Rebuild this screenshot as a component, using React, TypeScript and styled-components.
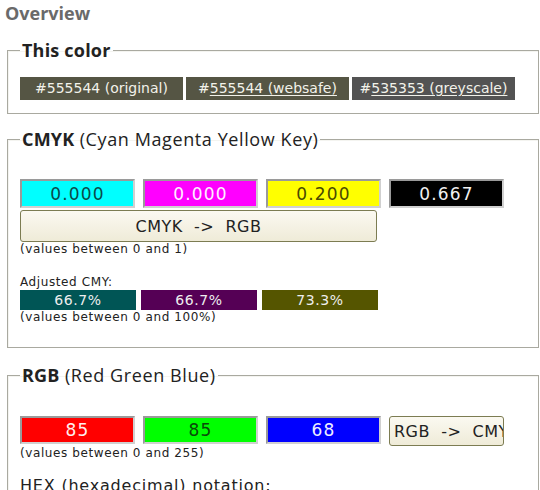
import styled, { createGlobalStyle } from "styled-components"

const GlobalStyle = createGlobalStyle`
  body {
    margin: 0;
    background: #ffffff;
    font-family: "DejaVu Sans", Verdana, sans-serif;
    color: #222;
  }
`

const Page = styled.div`
  width: 540px;
  height: 490px;
  overflow: hidden;
  padding: 0 1px 0 7px;
  box-sizing: border-box;
`

const Title = styled.h2`
  margin: 0 0 14px -2px;
  padding-top: 1px;
  font-family: "Open Sans", sans-serif;
  font-size: 18px;
  line-height: 24px;
  font-weight: 700;
  color: #6a6a6a;
`

const Fieldset = styled.fieldset<{ pad: string; gap: number }>`
  margin: 0 0 ${(p) => p.gap}px 0;
  padding: ${(p) => p.pad};
  border: 1px solid #a9a9a0;
  box-shadow: inset 1px 1px 0 #f4f4f0;
  min-width: 0;
`

const Legend = styled.legend`
  padding: 0 2px;
  font-family: "Open Sans", sans-serif;
  font-size: 18px;
  line-height: 22px;
  letter-spacing: 0.6px;
  color: #222;

  b {
    font-weight: 700;
    letter-spacing: 0.2px;
  }
`

const ChipRow = styled.div`
  display: flex;
  gap: 3px;
`

const Chip = styled.div<{ bg: string }>`
  width: 163px;
  height: 23px;
  background: ${(p) => p.bg};
  color: #f2f2ea;
  font-size: 14px;
  line-height: 23px;
  text-align: center;
  white-space: nowrap;

  a {
    color: #f2f2ea;
    text-decoration: underline;
    text-underline-offset: 2px;
  }
`

const InputRow = styled.div`
  display: flex;
  gap: 8px;
  align-items: flex-start;
`

const ColorInput = styled.input<{ bg: string; fg: string; h: number }>`
  width: 115px;
  height: ${(p) => p.h}px;
  box-sizing: border-box;
  margin: 0;
  padding: 0;
  border: 2px solid;
  border-color: #9a9a9a #d0d0d0 #d0d0d0 #9a9a9a;
  background: ${(p) => p.bg};
  color: ${(p) => p.fg};
  font-family: "DejaVu Sans", Verdana, sans-serif;
  font-size: 17px;
  letter-spacing: 1.2px;
  text-align: center;
  outline: none;
`

const ConvertButton = styled.button<{ w: number; h: number; align: string }>`
  width: ${(p) => p.w}px;
  height: ${(p) => p.h}px;
  box-sizing: border-box;
  margin: 0;
  padding: 0 4px;
  border: 1.5px solid #7c7c52;
  border-radius: 3px;
  background: linear-gradient(#fbf9f1, #efebd8);
  color: #222;
  font-family: "DejaVu Sans", Verdana, sans-serif;
  font-size: 16px;
  letter-spacing: 0.5px;
  text-align: ${(p) => p.align};
  white-space: pre;
  overflow: hidden;
`

const Spacer = styled.div<{ h: number }>`
  height: ${(p) => p.h}px;
`

const Note = styled.div`
  font-size: 12px;
  line-height: 15px;
  letter-spacing: 0.6px;
  color: #222;
`

const SmallLabel = styled.div`
  margin-top: 18px;
  font-size: 12px;
  line-height: 14px;
  letter-spacing: 0.6px;
`

const AdjRow = styled.div`
  display: flex;
  gap: 5px;
  margin-top: 1px;
`

const AdjChip = styled.div<{ bg: string }>`
  width: 116px;
  height: 20px;
  background: ${(p) => p.bg};
  color: #eeeeee;
  font-size: 14px;
  line-height: 20px;
  letter-spacing: 0.6px;
  text-align: center;
`

const HexLabel = styled.div`
  margin-top: 16px;
  font-size: 16px;
  line-height: 18px;
  letter-spacing: 0.8px;
`

export default function App() {
  return (
    <Page>
      <GlobalStyle />
      <Title>Overview</Title>

      <Fieldset pad="16px 12px 13px 12px" gap={14}>
        <Legend>
          <b>This color</b>
        </Legend>
        <ChipRow>
          <Chip bg="#555544">#555544 (original)</Chip>
          <Chip bg="#555544">
            #<a href="#">555544 (websafe)</a>
          </Chip>
          <Chip bg="#535353">
            #<a href="#">535353 (greyscale)</a>
          </Chip>
        </ChipRow>
      </Fieldset>

      <Fieldset pad="29px 12px 22px 12px" gap={16}>
        <Legend>
          <b>CMYK</b> (Cyan Magenta Yellow Key)
        </Legend>
        <InputRow>
          <ColorInput h={29} bg="#00ffff" fg="#0a4a4a" defaultValue="0.000" />
          <ColorInput h={29} bg="#ff00ff" fg="#ffeeff" defaultValue="0.000" />
          <ColorInput h={29} bg="#ffff00" fg="#4a4a00" defaultValue="0.200" />
          <ColorInput h={29} bg="#000000" fg="#f0f0f0" defaultValue="0.667" />
        </InputRow>
        <Spacer h={2} />
        <ConvertButton w={357} h={32} align="center">
          {"CMYK  ->  RGB"}
        </ConvertButton>
        <Note>(values between 0 and 1)</Note>
        <SmallLabel>Adjusted CMY:</SmallLabel>
        <AdjRow>
          <AdjChip bg="#005555">66.7%</AdjChip>
          <AdjChip bg="#550055">66.7%</AdjChip>
          <AdjChip bg="#555500">73.3%</AdjChip>
        </AdjRow>
        <Note>(values between 0 and 100%)</Note>
      </Fieldset>

      <Fieldset pad="30px 12px 20px 12px" gap={0}>
        <Legend>
          <b>RGB</b> (Red Green Blue)
        </Legend>
        <InputRow>
          <ColorInput h={28} bg="#ff0000" fg="#ffeeee" defaultValue="85" />
          <ColorInput h={28} bg="#00ff00" fg="#0a4a0a" defaultValue="85" />
          <ColorInput h={28} bg="#0000ff" fg="#eeeeff" defaultValue="68" />
          <ConvertButton w={115} h={30} align="left">
            {"RGB  ->  CMY"}
          </ConvertButton>
        </InputRow>
        <Note>(values between 0 and 255)</Note>
        <HexLabel>HEX (hexadecimal) notation:</HexLabel>
      </Fieldset>
    </Page>
  )
}
